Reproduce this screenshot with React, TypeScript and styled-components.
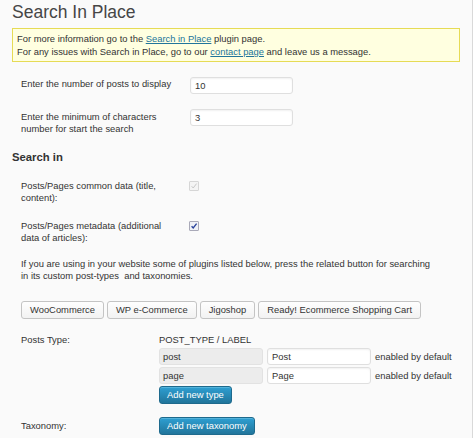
import React from 'react';
import styled, { createGlobalStyle } from 'styled-components';

const GlobalStyle = createGlobalStyle`
  html, body {
    margin: 0;
    background: #fff;
  }
  body {
    font-family: "Liberation Sans", Arial, sans-serif;
    color: #333;
  }
`;

const Page = styled.div`
  box-sizing: border-box;
  width: 473px;
  min-height: 438px;
  padding: 0 12px 0 12px;
  background: #fafafa;
  border-right: 1px solid #d9d9d9;
  font-size: 9.4px;
`;

const Title = styled.h2`
  margin: 0;
  font-size: 17.5px;
  font-weight: normal;
  line-height: 25px;
  color: #464646;
`;

const Notice = styled.div`
  margin-top: 3px;
  padding: 3px 4px;
  background: #ffffe0;
  border: 1px solid #e6db55;
  line-height: 13px;
  color: #333;
`;

const Link = styled.a`
  color: #21759b;
  text-decoration: underline;
`;

const Row = styled.div<{ $top: number; $col: number }>`
  display: grid;
  grid-template-columns: ${p => p.$col}px 1fr;
  align-items: start;
  justify-items: start;
  margin-top: ${p => p.$top}px;
  padding-left: 9px;
`;

const Label = styled.div<{ $pad?: number }>`
  max-width: 155px;
  padding-top: ${p => p.$pad ?? 1}px;
  line-height: 12px;
`;

const TextInput = styled.input`
  box-sizing: border-box;
  width: ${p => p.width ?? 103}px;
  height: 17px;
  margin: 0;
  padding: 0 4px;
  border: 1px solid #dfdfdf;
  border-radius: 3px;
  background: #fff;
  box-shadow: inset 0 1px 2px rgba(0, 0, 0, 0.06);
  font-family: inherit;
  font-size: 9.4px;
  color: #333;
  outline: none;
`;

const Heading = styled.h3`
  margin: 15px 0 0;
  font-size: 11.3px;
  line-height: 14px;
  font-weight: bold;
  color: #333;
`;

const Box = styled.span<{ $disabled?: boolean }>`
  display: flex;
  align-items: center;
  justify-content: center;
  box-sizing: border-box;
  width: 10px;
  height: 10px;
  margin-top: 1px;
  border: 1px solid ${p => (p.$disabled ? '#d6d6d6' : '#a9a9b8')};
  border-radius: 1px;
  background: ${p => (p.$disabled ? '#f4f4f4' : '#eef0f6')};
`;

const Paragraph = styled.p`
  max-width: 418px;
  margin: 14px 0 0;
  padding-left: 9px;
  line-height: 12px;
`;

const ButtonBar = styled.div`
  display: flex;
  gap: 3px;
  margin-top: 19px;
  padding-left: 9px;
`;

const Button = styled.button<{ $primary?: boolean }>`
  box-sizing: border-box;
  height: 18px;
  margin: 0;
  padding: 0 ${p => (p.$primary ? 7 : 8)}px;
  border: 1px solid ${p => (p.$primary ? '#1e6a8d' : '#c4c4c4')};
  border-radius: 3px;
  background: ${p =>
    p.$primary
      ? 'linear-gradient(to bottom, #2e9fd2, #21759b)'
      : 'linear-gradient(to bottom, #fefefe, #f2f2f2)'};
  box-shadow: ${p => (p.$primary ? 'inset 0 1px 0 rgba(120, 200, 230, 0.5)' : 'none')};
  font-family: inherit;
  font-size: 9.4px;
  line-height: 16px;
  color: ${p => (p.$primary ? '#fff' : '#333')};
  white-space: nowrap;
  cursor: pointer;
`;

const TypeHead = styled.div`
  line-height: 12px;
  padding-top: 0;
`;

const TypeRow = styled.div`
  display: flex;
  align-items: center;
  gap: 4px;
  margin-top: 2px;
`;

const Slug = styled.div`
  box-sizing: border-box;
  width: 104px;
  height: 17px;
  padding: 0 3px;
  border: 1px solid #e2e2e2;
  border-radius: 3px;
  background: #ececec;
  line-height: 15px;
`;

const Note = styled.span`
  white-space: nowrap;
`;

const Stack = styled.div`
  display: flex;
  flex-direction: column;
  align-items: flex-start;
`;

const Spacer = styled.div`
  height: 2px;
`;

function Check({ disabled }: { disabled?: boolean }) {
  return (
    <Box $disabled={disabled}>
      <svg width="8" height="8" viewBox="0 0 8 8">
        <path
          d="M1.6 4.2 L3.2 6 L6.6 1.6"
          fill="none"
          stroke={disabled ? '#c3c3c3' : '#27409a'}
          strokeWidth={disabled ? 0.9 : 1.3}
        />
      </svg>
    </Box>
  );
}

const types = [
  { slug: 'post', label: 'Post' },
  { slug: 'page', label: 'Page' },
];

const plugins = ['WooCommerce', 'WP e-Commerce', 'Jigoshop', 'Ready! Ecommerce Shopping Cart'];

function App() {
  return (
    <Page>
      <GlobalStyle />
      <Title>Search In Place</Title>
      <Notice>
        For more information go to the <Link href="#">Search in Place</Link> plugin page.
        <br />
        For any issues with Search in Place, go to our <Link href="#">contact page</Link> and leave
        us a message.
      </Notice>

      <Row $top={15} $col={169}>
        <Label>Enter the number of posts to display</Label>
        <TextInput defaultValue="10" />
      </Row>
      <Row $top={15} $col={169}>
        <Label $pad={2}>Enter the minimum of characters number for start the search</Label>
        <TextInput defaultValue="3" />
      </Row>

      <Heading>Search in</Heading>
      <Row $top={16} $col={168}>
        <Label $pad={0}>Posts/Pages common data (title, content):</Label>
        <Check disabled />
      </Row>
      <Row $top={16} $col={168}>
        <Label $pad={0}>Posts/Pages metadata (additional data of articles):</Label>
        <Check />
      </Row>

      <Paragraph>
        If you are using in your website some of plugins listed below, press the related button for
        searching in its custom post-types&nbsp; and taxonomies.
      </Paragraph>

      <ButtonBar>
        {plugins.map(p => (
          <Button key={p}>{p}</Button>
        ))}
      </ButtonBar>

      <Row $top={15} $col={138}>
        <Label $pad={0}>Posts Type:</Label>
        <Stack>
          <TypeHead>POST_TYPE / LABEL</TypeHead>
          {types.map(t => (
            <TypeRow key={t.slug}>
              <Slug>{t.slug}</Slug>
              <TextInput width={104} defaultValue={t.label} />
              <Note>enabled by default</Note>
            </TypeRow>
          ))}
          <Spacer />
          <Button $primary>Add new type</Button>
        </Stack>
      </Row>

      <Row $top={13} $col={138}>
        <Label $pad={3}>Taxonomy:</Label>
        <Button $primary>Add new taxonomy</Button>
      </Row>
    </Page>
  );
}

export default App;
